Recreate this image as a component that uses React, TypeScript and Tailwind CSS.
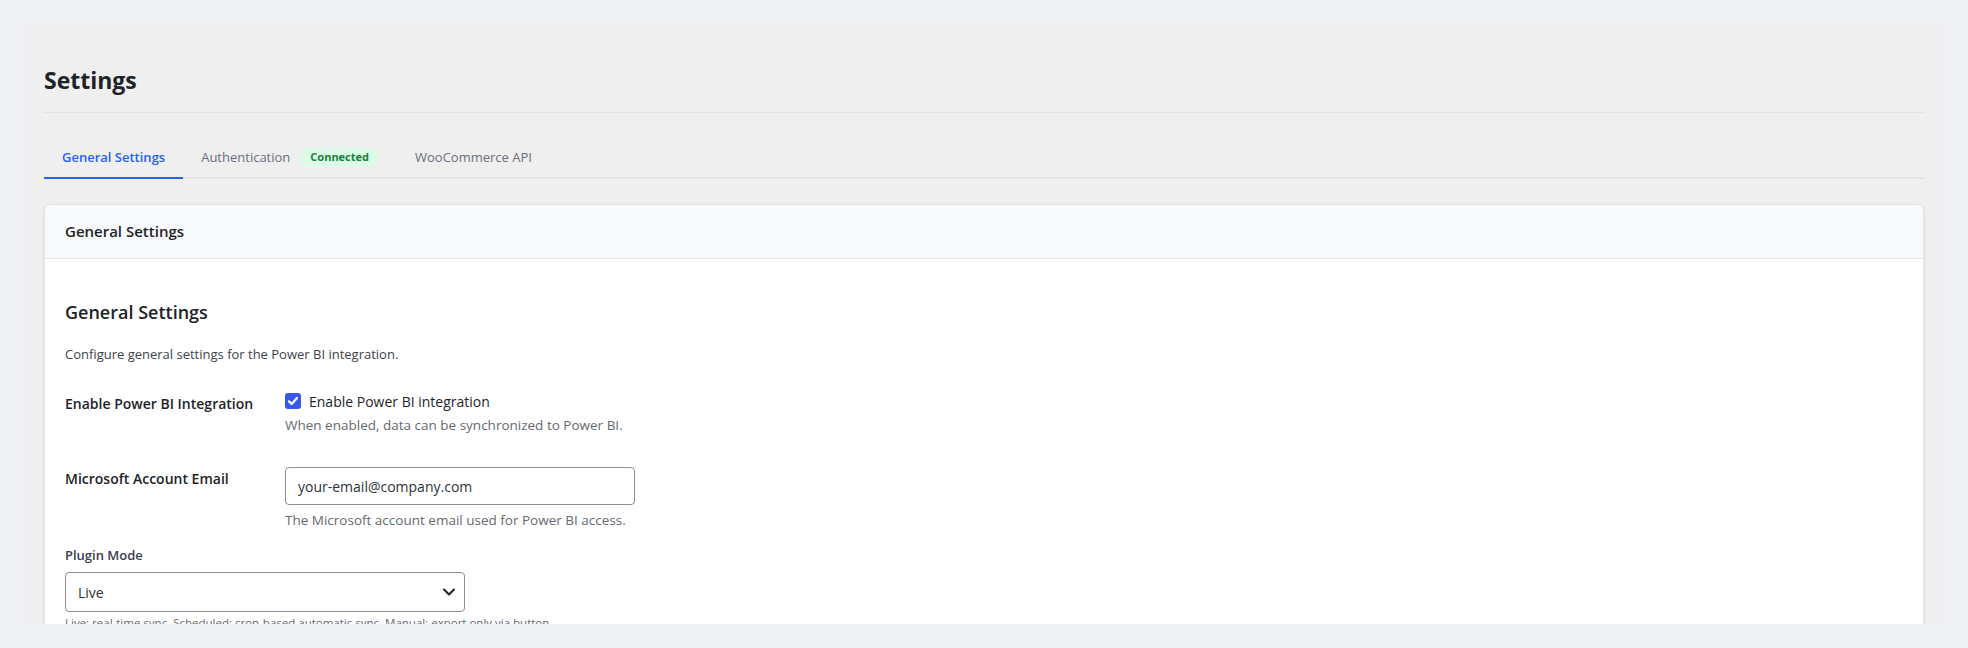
import { type FC } from 'react';
import { ChevronDown } from 'lucide-react';

const tabs = [
  { id: 'general', label: 'General Settings', active: true },
  { id: 'auth', label: 'Authentication', badge: 'Connected' },
  { id: 'woo', label: 'WooCommerce API' },
];

const Tabs: FC = () => (
  <div className="mt-6 flex border-b-2 border-[#e3e4ea]">
    {tabs.map((tab) => (
      <div
        key={tab.id}
        className={
          tab.active
            ? '-mb-[2px] flex items-center gap-[10px] border-b-2 border-[#2563eb] px-[18px] py-[10px] text-[13px] font-semibold leading-5 text-[#2563eb]'
            : '-mb-[2px] flex items-center gap-[10px] border-b-2 border-transparent px-[18px] py-[10px] text-[13px] font-medium leading-5 text-[#6b7080]'
        }
      >
        {tab.label}
        {tab.badge && (
          <span className="flex h-[19px] items-center rounded-full bg-[#dcfce7] px-[10px] text-[11px] font-bold text-[#15803d]">
            {tab.badge}
          </span>
        )}
      </div>
    ))}
  </div>
);

const Checkbox: FC = () => (
  <span className="flex h-4 w-4 items-center justify-center rounded-[3px] bg-[#3858e9]">
    <svg viewBox="0 0 16 16" className="h-4 w-4" fill="none">
      <path d="M4 8.4 6.6 11 12 5" stroke="#fff" strokeWidth="2.2" strokeLinecap="round" strokeLinejoin="round" />
    </svg>
  </span>
);

export default function App() {
  return (
    <div
      className="h-[648px] overflow-hidden bg-[#f0f1f5] p-6"
      style={{ fontFamily: '"Open Sans", "Noto Sans", sans-serif' }}
    >
      <div className="h-full overflow-hidden bg-[#efefef] px-5 pt-10">
        {/* Page title */}
        <h1 className="border-b border-[#e2e4e9] pb-4 text-[23px] font-bold leading-8 text-[#1d2327]">Settings</h1>

        <Tabs />

        {/* Settings card */}
        <div className="mt-[25px] rounded-t-[6px] border border-[#e1e3e8] bg-white shadow-sm">
          <div className="flex h-[54px] items-center rounded-t-[6px] border-b border-[#e2e4e8] bg-[#f8f9fb] px-5 text-[15px] font-semibold text-[#1d2327]">
            General Settings
          </div>

          <div className="px-5 pt-[42px]">
            <h2 className="text-[18px] font-semibold leading-[23px] text-[#1d2327]">General Settings</h2>
            <p className="mt-5 text-[13px] leading-5 text-[#3c434a]">
              Configure general settings for the Power BI integration.
            </p>

            <div className="mt-[11px]">
              {/* Enable row */}
              <div className="flex">
                <div className="w-[220px] py-5 text-[14px] font-semibold leading-[18px] text-[#1d2327]">
                  Enable Power BI Integration
                </div>
                <div className="pb-[15px] pt-[14px]">
                  <label className="flex h-6 items-center gap-2 text-[14px] text-[#1d2327]">
                    <Checkbox />
                    Enable Power BI integration
                  </label>
                  <p className="mt-[2px] text-[13.5px] leading-5 text-[#646970]">
                    When enabled, data can be synchronized to Power BI.
                  </p>
                </div>
              </div>

              {/* Email row */}
              <div className="flex">
                <div className="w-[220px] py-5 text-[14px] font-semibold leading-[18px] text-[#1d2327]">
                  Microsoft Account Email
                </div>
                <div className="pb-[15px] pt-[17px]">
                  <div className="flex h-[38px] w-[350px] items-center rounded-[4px] border border-[#8c8f94] bg-white pl-3 text-[14px] text-[#2c3338]">
                    your-email@company.com
                  </div>
                  <p className="mt-[5px] text-[13.5px] leading-5 text-[#646970]">
                    The Microsoft account email used for Power BI access.
                  </p>
                </div>
              </div>

              {/* Plugin mode */}
              <div className="text-[13px] font-semibold leading-5 text-[#374151]">Plugin Mode</div>
              <div className="mt-[7px] flex h-10 w-[400px] items-center justify-between rounded-[4px] border border-[#8c8f94] bg-white pl-3 pr-[5px] text-[14px] text-[#2c3338]">
                Live
                <ChevronDown size={20} strokeWidth={2.5} className="text-[#1d2327]" />
              </div>
              <p className="mt-[2px] text-[11.5px] leading-[18px] text-[#646970]">
                Live: real-time sync. Scheduled: cron-based automatic sync. Manual: export only via button.
              </p>
            </div>
          </div>
        </div>
      </div>
    </div>
  );
}
